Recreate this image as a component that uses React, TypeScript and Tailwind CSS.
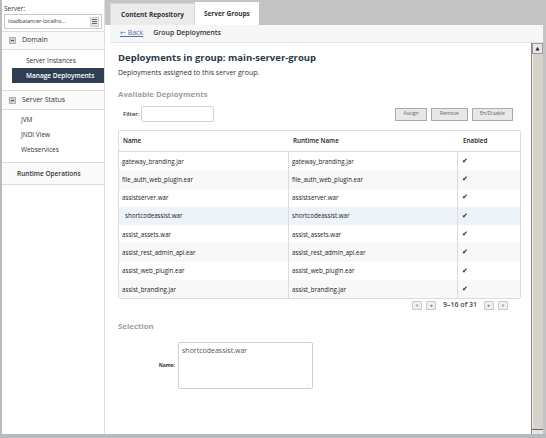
import React from "react";

const rows = [
  "gateway_branding.jar",
  "file_auth_web_plugin.ear",
  "assistserver.war",
  "shortcodeassist.war",
  "assist_assets.war",
  "assist_rest_admin_api.ear",
  "assist_web_plugin.ear",
  "assist_branding.jar",
];

function MinusBox() {
  return (
    <span className="w-[7px] h-[7px] bg-[#c9ccd0] border border-[#b0b4b8] flex items-center justify-center">
      <span className="w-[3px] h-px bg-[#555]" />
    </span>
  );
}

function PagerBtn({ children }: { children: React.ReactNode }) {
  return (
    <span className="w-[10px] h-[9px] border border-[#c8c8c8] bg-[#f0f0f0] rounded-[1px] flex items-center justify-center text-[5px] text-[#777] leading-none">
      {children}
    </span>
  );
}

export default function App() {
  return (
    <div
      className="w-[546px] h-[438px] flex bg-[#c4c4c4] border-l-2 border-b-4 border-[#b8bbbe] overflow-hidden text-[#333]"
      style={{ fontFamily: '"Open Sans", "DejaVu Sans", sans-serif' }}
    >
      {/* Sidebar */}
      <aside className="w-[103px] shrink-0 bg-white border-r border-[#dedede] flex flex-col">
        <div className="px-[2px] pt-[5px] h-[32px] border-b border-[#dcdcdc]">
          <div className="text-[6.5px] leading-[8px]">Server:</div>
          <div className="mt-px h-[15px] border border-[#c9c9c9] flex items-center justify-between pl-[3px] pr-[2px]">
            <span className="text-[5.5px]">loadbalancer-localho...</span>
            <span className="w-[9px] h-[10px] bg-[#e4e4e4] border border-[#cfcfcf] flex flex-col items-center justify-center gap-[1px]">
              <span className="w-[5px] h-px bg-[#666]" />
              <span className="w-[5px] h-px bg-[#666]" />
              <span className="w-[5px] h-px bg-[#666]" />
            </span>
          </div>
        </div>
        <div className="h-[18px] border-b border-[#dcdcdc] flex items-center gap-[6px] pl-[7px] text-[7px] bg-[#fafafa]">
          <MinusBox />
          <span>Domain</span>
        </div>
        <div className="h-[40px] flex flex-col pt-[4px] text-[6.5px]">
          <div className="h-[14px] flex items-center pl-[24px]">Server Instances</div>
          <div className="h-[15px] ml-[10px] flex items-center pl-[14px] bg-[#2f3e52] text-white font-semibold">
            Manage Deployments
          </div>
        </div>
        <div className="h-[20px] border-t border-b border-[#dcdcdc] flex items-center gap-[6px] pl-[7px] text-[7px] bg-[#fafafa]">
          <MinusBox />
          <span>Server Status</span>
        </div>
        <div className="h-[53px] flex flex-col pt-[2px] text-[6.5px] border-b border-[#dcdcdc]">
          <div className="h-[15px] flex items-center pl-[19px]">JVM</div>
          <div className="h-[15px] flex items-center pl-[19px]">JNDI View</div>
          <div className="h-[15px] flex items-center pl-[19px]">Webservices</div>
        </div>
        <div className="h-[22px] flex items-center pl-[15px] text-[6.5px] font-semibold border-b border-[#dcdcdc] bg-[#fafafa]">
          Runtime Operations
        </div>
      </aside>

      {/* Main */}
      <main className="flex-1 flex flex-col pr-[3px]">
        <div className="h-[25px] shrink-0 flex items-end pl-[5px]">
          <div className="h-[22px] px-[10px] flex items-center bg-[#ebebeb] border-t border-l border-r border-[#d8d8d8] text-[6.5px] font-bold">
            Content Repository
          </div>
          <div className="h-[23px] w-[64px] flex items-center justify-center bg-white text-[6.5px] font-bold">
            Server Groups
          </div>
        </div>
        <div className="flex-1 bg-white flex flex-col pl-[5px]">
          <div className="h-[18px] shrink-0 bg-[#f6f6f6] border-b border-[#e4e4e4] flex items-center gap-[10px] pl-[10px] text-[7px]">
            <span className="text-[#4a6fb0] underline">← Back</span>
            <span className="font-semibold">Group Deployments</span>
          </div>
          <div className="flex-1 flex">
            <div className="flex-1 pl-[8px] pr-[10px] pt-[8px]">
              <h1 className="text-[9.5px] font-bold text-[#2a3949] leading-[14px]">
                Deployments in group: main-server-group
              </h1>
              <p className="text-[7px] mt-[3px] leading-[9px]">Deployments assigned to this server group.</p>
              <h2 className="text-[7.8px] font-bold text-[#a0a0a0] mt-[12px] leading-[10px]">Available Deployments</h2>
              <div className="flex items-center justify-between mt-[7px] pl-[5px]">
                <div className="flex items-center text-[6px]">
                  <span className="font-semibold">Filter:</span>
                  <span className="w-[73px] h-[16px] border border-[#d2d2d2] rounded-[2px] ml-px" />
                </div>
                <div className="flex items-center gap-[4px] pr-[8px] text-[5px] text-[#666]">
                  <span className="w-[32px] h-[13px] border border-[#aaa] bg-[#e8e8e8] flex items-center justify-center">Assign</span>
                  <span className="w-[37px] h-[13px] border border-[#aaa] bg-[#e8e8e8] flex items-center justify-center">Remove</span>
                  <span className="w-[41px] h-[13px] border border-[#aaa] bg-[#e8e8e8] flex items-center justify-center">En/Disable</span>
                </div>
              </div>
              <div className="mt-[8px] border border-[#dcdcdc] rounded-[2px] text-[6.2px] text-[#222]">
                <div className="h-[21px] flex items-center border-b border-[#dcdcdc] font-semibold text-[6.3px]">
                  <div className="w-[170px] pl-[4px]">Name</div>
                  <div className="w-[169px] pl-[4px]">Runtime Name</div>
                  <div className="flex-1 pl-[5px]">Enabled</div>
                </div>
                {rows.map((r, i) => (
                  <div
                    key={r}
                    className={`h-[18.3px] flex items-center ${
                      i === 3 ? "bg-[#eef3f9]" : i % 2 === 1 ? "bg-[#f8f8f8]" : "bg-white"
                    }`}
                  >
                    <div className={`w-[170px] h-full flex items-center border-r border-[#dcdcdc] ${i === 3 ? "pl-[6px]" : "pl-[3px]"}`}>{r}</div>
                    <div className="w-[169px] h-full flex items-center pl-[3px] border-r border-[#dcdcdc]">{r}</div>
                    <div className="flex-1 pl-[4px] text-[7px] text-[#222]">✔</div>
                  </div>
                ))}
              </div>
              <div className="flex items-center justify-end gap-[4px] mt-[1px] pr-[13px] text-[7px] font-semibold text-[#444]">
                <PagerBtn>«</PagerBtn>
                <PagerBtn>◂</PagerBtn>
                <span className="mx-[3px]">9–16 of 31</span>
                <PagerBtn>▸</PagerBtn>
                <PagerBtn>»</PagerBtn>
              </div>
              <h2 className="text-[7.8px] font-bold text-[#a0a0a0] mt-[10px] leading-[10px]">Selection</h2>
              <div className="flex items-center mt-[11px] pl-[37px]">
                <span className="text-[5px] font-bold mr-[3px] w-[20px] text-right">Name:</span>
                <div className="w-[135px] h-[47px] border border-[#cfcfcf] rounded-[2px] px-[3px] pt-[3px] text-[7px] text-[#555] relative">
                  shortcodeassist.war
                  <span className="absolute right-[1px] bottom-[1px] text-[5px] text-[#aaa] leading-none">⋰</span>
                </div>
              </div>
            </div>
            {/* scrollbar */}
            <div className="w-[12px] shrink-0 flex flex-col bg-[#d4d0c8] border-l border-[#888]">
              <div className="h-[11px] bg-[#e8e8e8] border border-[#999] flex items-center justify-center text-[5px] leading-none text-[#222]">▲</div>
              <div className="flex-1 bg-[#d6d2ca] border-l border-[#f0ede8]" />
              <div className="h-[5px] bg-[#e6e6e6] border-t border-[#666]" />
            </div>
          </div>
        </div>
      </main>
    </div>
  );
}
